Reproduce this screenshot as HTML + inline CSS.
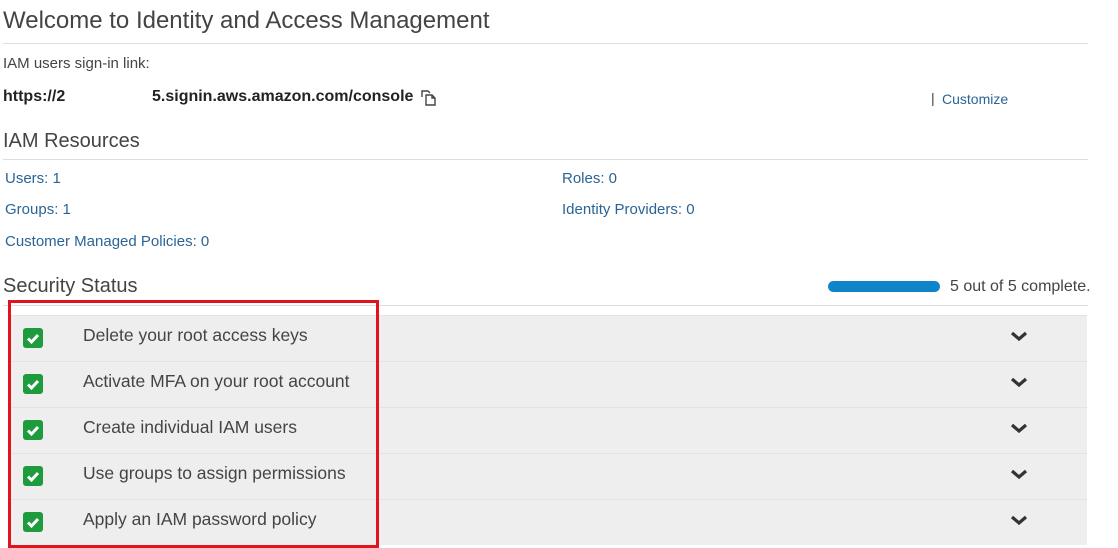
<!DOCTYPE html>
<html><head><style>
body{margin:0;width:1118px;height:547px;background:#fff;font-family:"Liberation Sans",sans-serif;position:relative;overflow:hidden;color:#444}
.a{position:absolute;white-space:nowrap}
.hr{position:absolute;left:3px;width:1085px;height:1px;background:#ddd}
.lnk{color:#2a6496;font-size:15px}
.row{position:absolute;left:10px;width:1077px;height:45px;background:#eee;border-top:1px solid #e2e2e2}
.cb{position:absolute;left:13px;top:12px;width:20px;height:20px;background:#1e9b3c;border-radius:3px}
.row .t{position:absolute;left:73px;top:9px;font-size:17.5px;color:#444}
.chev{position:absolute;left:999px;top:13px}
</style></head><body>
<div class="a" style="left:3px;top:7px;font-size:24px;color:#444">Welcome to Identity and Access Management</div>
<div class="hr" style="top:43px"></div>
<div class="a" style="left:3px;top:55px;font-size:15px;color:#444">IAM users sign-in link:</div>
<div class="a" style="left:3px;top:88px;font-size:16px;font-weight:bold;color:#222">https://2</div>
<div class="a" style="left:152px;top:88px;font-size:16px;font-weight:bold;color:#222">5.signin.aws.amazon.com/console</div>
<svg class="a" style="left:420px;top:89px" width="18" height="18" viewBox="0 0 18 18" fill="none" stroke="#444" stroke-width="1.4"><path d="M2 8V2h6l2 2"/><path d="M6 6h6l3 3v7H6z"/><path d="M12 6v3h3"/></svg>
<div class="a" style="left:931px;top:90px;font-size:14px;color:#444">|</div>
<div class="a lnk" style="left:942px;top:91px;font-size:14px">Customize</div>
<div class="a" style="left:3px;top:130px;font-size:20px;color:#444">IAM Resources</div>
<div class="hr" style="top:159px"></div>
<div class="a lnk" style="left:5px;top:170px">Users: 1</div>
<div class="a lnk" style="left:562px;top:170px">Roles: 0</div>
<div class="a lnk" style="left:5px;top:201px">Groups: 1</div>
<div class="a lnk" style="left:562px;top:201px">Identity Providers: 0</div>
<div class="a lnk" style="left:5px;top:233px">Customer Managed Policies: 0</div>
<div class="a" style="left:3px;top:275px;font-size:20px;color:#444">Security Status</div>
<div class="a" style="left:828px;top:281px;width:112px;height:11px;border-radius:6px;background:#0f84c8"></div>
<div class="a" style="left:950px;top:278px;font-size:16px;color:#444">5 out of 5 complete.</div>
<div class="hr" style="top:305px"></div>
<div class="row" style="top:315px"><div class="cb"><svg width="20" height="20"><path d="M5 10.5l3.5 3.5 6.5-7" stroke="#fff" stroke-width="3" fill="none"/></svg></div><div class="t">Delete your root access keys</div><svg class="chev" width="20" height="14"><path d="M3 4l7 6 7-6" stroke="#333" stroke-width="3.2" fill="none"/></svg></div>
<div class="row" style="top:361px"><div class="cb"><svg width="20" height="20"><path d="M5 10.5l3.5 3.5 6.5-7" stroke="#fff" stroke-width="3" fill="none"/></svg></div><div class="t">Activate MFA on your root account</div><svg class="chev" width="20" height="14"><path d="M3 4l7 6 7-6" stroke="#333" stroke-width="3.2" fill="none"/></svg></div>
<div class="row" style="top:407px"><div class="cb"><svg width="20" height="20"><path d="M5 10.5l3.5 3.5 6.5-7" stroke="#fff" stroke-width="3" fill="none"/></svg></div><div class="t">Create individual IAM users</div><svg class="chev" width="20" height="14"><path d="M3 4l7 6 7-6" stroke="#333" stroke-width="3.2" fill="none"/></svg></div>
<div class="row" style="top:453px"><div class="cb"><svg width="20" height="20"><path d="M5 10.5l3.5 3.5 6.5-7" stroke="#fff" stroke-width="3" fill="none"/></svg></div><div class="t">Use groups to assign permissions</div><svg class="chev" width="20" height="14"><path d="M3 4l7 6 7-6" stroke="#333" stroke-width="3.2" fill="none"/></svg></div>
<div class="row" style="top:499px"><div class="cb"><svg width="20" height="20"><path d="M5 10.5l3.5 3.5 6.5-7" stroke="#fff" stroke-width="3" fill="none"/></svg></div><div class="t">Apply an IAM password policy</div><svg class="chev" width="20" height="14"><path d="M3 4l7 6 7-6" stroke="#333" stroke-width="3.2" fill="none"/></svg></div>
<div class="a" style="left:8px;top:300px;width:365px;height:242px;border:3px solid #e0141e"></div>
</body></html>
